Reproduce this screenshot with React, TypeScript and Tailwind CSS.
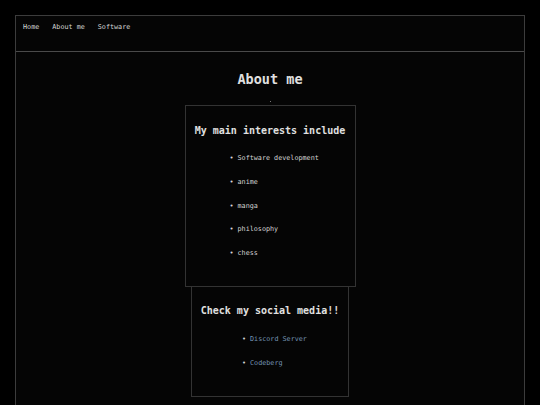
const interests = ['Software development', 'anime', 'manga', 'philosophy', 'chess'];

const socials = [
    { name: 'Discord Server', href: '#' },
    { name: 'Codeberg', href: '#' },
];

const navLinks = ['Home', 'About me', 'Software'];

export default function App() {
    return (
        <div className="min-h-[405px] bg-black pt-[15px] font-['DejaVu_Sans_Mono',monospace] text-[#d4d4d4]">
            <div className="mx-[15px] min-h-[400px] border border-[#3c3c3c] bg-[#050505]">
                {/* Top navigation */}
                <header className="h-[36px] border-b border-[#4a4a4a] px-[7px] pt-[7px]">
                    <nav className="flex gap-[13px] text-[6.75px] leading-[8px]">
                        {navLinks.map((link) => (
                            <a key={link} href="#" className="text-[#d4d4d4]">
                                {link}
                            </a>
                        ))}
                    </nav>
                </header>

                <main className="flex flex-col items-center">
                    <h1 className="mt-[19px] text-[13.5px] leading-[16px] font-bold text-[#e0e0e0]">About me</h1>
                    <div className="mt-[14px] h-[1px] w-[1px] bg-[#777]" />

                    {/* Interests */}
                    <section className="mt-[3px] w-[171px] border border-[#333] pt-[19px] pb-[29px]">
                        <h2 className="text-center text-[10px] leading-[12px] font-bold text-[#e0e0e0]">My main interests include</h2>
                        <ul className="mt-[17px] flex flex-col gap-[15.75px] pl-[44px] text-[6.75px] leading-[8px]">
                            {interests.map((item) => (
                                <li key={item} className="flex">
                                    <span className="w-[8px]">•</span>
                                    <span>{item}</span>
                                </li>
                            ))}
                        </ul>
                    </section>

                    {/* Social links */}
                    <section className="w-[158px] border border-t-0 border-[#333] pt-[18px] pb-[29px]">
                        <h2 className="text-center text-[10px] leading-[12px] font-bold text-[#e0e0e0]">Check my social media!!</h2>
                        <ul className="mt-[18px] flex flex-col gap-[15.5px] pl-[50px] text-[6.75px] leading-[8px]">
                            {socials.map((s) => (
                                <li key={s.name} className="flex">
                                    <span className="w-[8px]">•</span>
                                    <a href={s.href} className="text-[#7393b3]">
                                        {s.name}
                                    </a>
                                </li>
                            ))}
                        </ul>
                    </section>
                </main>
            </div>
        </div>
    );
}
